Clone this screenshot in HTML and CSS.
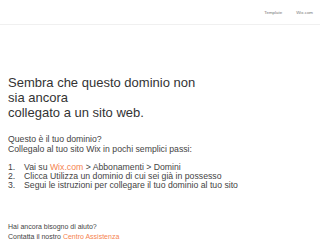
FILE: index.html
```html
<!DOCTYPE html>
<html lang="it">
<head>
    <meta charset="UTF-8">
    <title>Dominio non collegato</title>
    <link rel="stylesheet" href="styles.css">
</head>
<body>
    <!-- Top bar -->
    <header class="topbar">
        <nav class="topnav">
            <a href="#">Template</a>
            <a href="#">Wix.com</a>
        </nav>
    </header>

    <main class="content">
        <h1 class="title">Sembra che questo dominio non<br>sia ancora<br>collegato a un sito web.</h1>

        <p class="intro">Questo è il tuo dominio?<br>Collegalo al tuo sito Wix in pochi semplici passi:</p>

        <ol class="steps">
            <li><span class="num">1.</span>Vai su <a href="#">Wix.com</a> &gt; Abbonamenti &gt; Domini</li>
            <li><span class="num">2.</span>Clicca Utilizza un dominio di cui sei già in possesso</li>
            <li><span class="num">3.</span>Segui le istruzioni per collegare il tuo dominio al tuo sito</li>
        </ol>

        <p class="help">Hai ancora bisogno di aiuto?<br>Contatta il nostro <a href="#">Centro Assistenza</a></p>
    </main>
</body>
</html>
```

FILE: styles.css
```css
body {
    font-family: 'Liberation Sans', Arial, sans-serif;
    background-color: #fff;
    color: #333;
    margin: 0;
    padding: 0;
}
a {
    color: #f5834f;
    text-decoration: none;
}
.topbar {
    height: 24px;
    border-bottom: 1px solid #f0f0f0;
    display: flex;
    justify-content: flex-end;
    align-items: center;
}
.topnav {
    display: flex;
    gap: 14px;
    padding-right: 7px;
}
.topnav a {
    font-size: 4.4px;
    color: #777;
}
.content {
    padding: 50px 8px 0 8px;
}
.title {
    font-size: 13px;
    line-height: 15px;
    font-weight: normal;
    color: #333;
    margin: 0 0 14px 0;
}
.intro {
    font-size: 8.7px;
    line-height: 10px;
    color: #444;
    margin: 0 0 9px 0;
}
.steps {
    list-style: none;
    font-size: 8.7px;
    line-height: 9px;
    color: #444;
    margin: 0 0 32px 0;
    padding: 0;
}
.steps .num {
    display: inline-block;
    width: 16px;
}
.help {
    font-size: 7px;
    line-height: 9.5px;
    color: #444;
    margin: 0;
}
```
